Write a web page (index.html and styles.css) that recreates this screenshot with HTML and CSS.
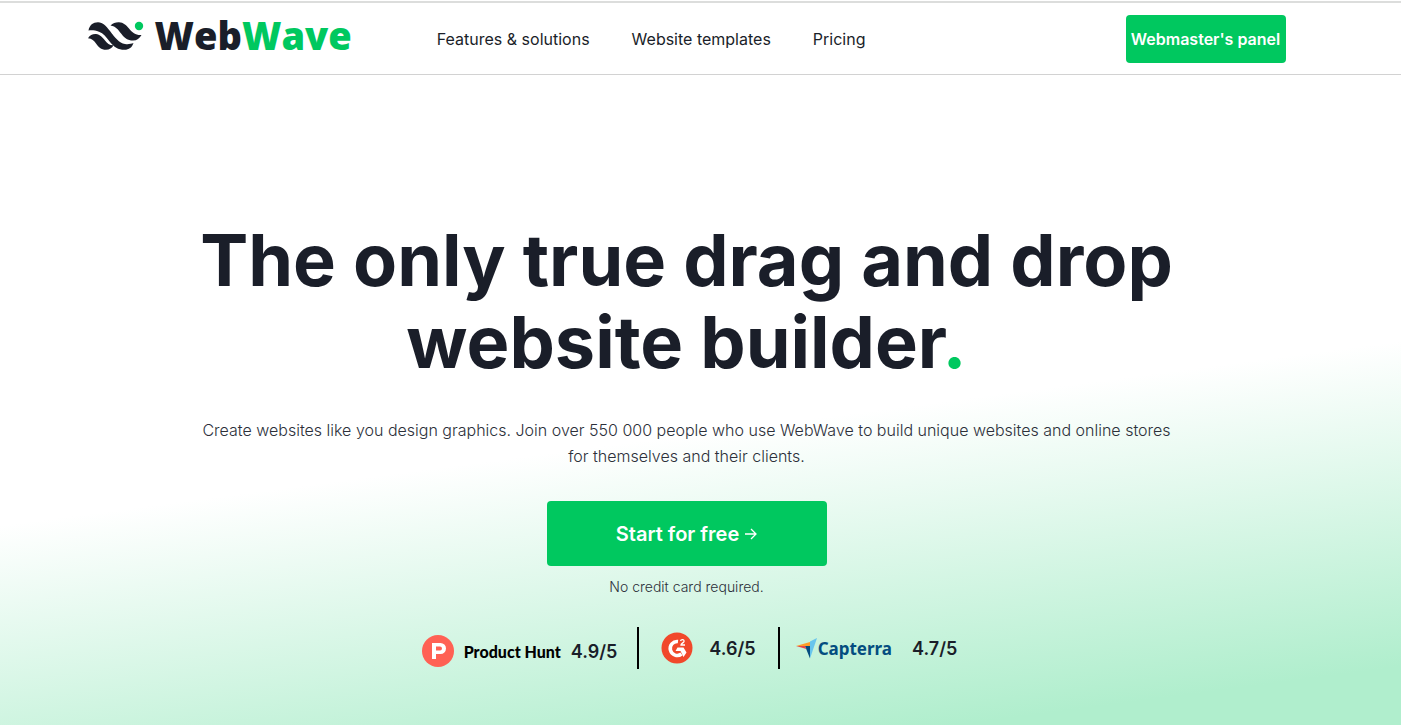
FILE: index.html
```html
<!DOCTYPE html>
<html lang="en">
<head>
<meta charset="utf-8">
<meta name="viewport" content="width=device-width, initial-scale=1">
<title>WebWave</title>
<link rel="stylesheet" href="styles.css">
</head>
<body>
<header class="site-header">
  <div class="header-inner">
    <a class="logo" href="#" aria-label="WebWave">
      <svg class="logo-mark" viewBox="0 0 56 30" width="56" height="30" aria-hidden="true">
        <g fill="#1a1e29">
          <path d="M0.500 9.500C1.500 4 5 1.200 10 1.200C15 1.200 18 5 22 10C27 16.500 31 22 37 23C40.500 23.500 43 22.800 45.500 22C44 26.500 41 28.800 36.500 28.800C30 28.800 26 26 22 21C18 16 15.500 12.500 11 10.800C7 9.300 4 9 0.500 9.500Z"/>
          <path d="M22.500 4.500C25 2.200 27.500 1.200 31 1.300C35.500 1.600 38 4 41 7.500C44.500 11.800 48 14.500 53.500 14C51.500 17.500 49 19.500 45 19.600C39.500 19.500 36.500 17 33.500 13C30 8.500 28 5.500 22.500 4.500Z"/>
          <path d="M0 17.200C2 14.200 4.500 12.800 8 13C12 13.300 14.500 16.500 17 19.500C19.500 22.500 21.500 24.500 25.500 24.300C24 27.200 21.500 28.800 18 28.800C13 28.800 10.500 26 8 22.500C6 19.500 4 17.500 0 17.200Z"/>
        </g>
        <circle cx="51" cy="5" r="4.200" fill="#00c85f"/>
      </svg>
      <span class="logo-text">Web<span class="accent">Wave</span></span>
    </a>
    <nav class="nav" aria-label="Main">
      <a href="#">Features &amp; solutions</a>
      <a href="#">Website templates</a>
      <a href="#">Pricing</a>
    </nav>
    <a class="panel-button" href="#">Webmaster's panel</a>
  </div>
</header>
<main class="hero">
  <h1>The only true drag and drop website builder<span class="accent">.</span></h1>
  <p class="lead">Create websites like you design graphics. Join over 550 000 people who use WebWave to build unique websites and online stores for themselves and their clients.</p>
  <a class="cta" href="#">Start for free
    <svg viewBox="0 0 12 12" width="12" height="12" fill="none" stroke="currentColor" stroke-width="1.300" aria-hidden="true"><path d="M0 6H11M6 1L11 6L6 11"/></svg>
  </a>
  <p class="note">No credit card required.</p>
  <ul class="ratings">
    <li class="rating">
      <svg viewBox="0 0 32 32" width="32" height="32" aria-hidden="true"><circle cx="16" cy="16" r="16" fill="#ff6154"/><path fill="#fff" fill-rule="evenodd" d="M10 8H18.500A5.500 5.500 0 0 1 18.500 19H14V24H10ZM14 11.500V15.500H18A2 2 0 0 0 18 11.500Z"/></svg>
      <span class="hunt">Product Hunt</span>
      <span class="score">4.9/5</span>
    </li>
    <li class="rating rating-g2">
      <svg viewBox="0 0 32 32" width="32" height="32" role="img" aria-label="G2"><circle cx="16" cy="16" r="15.500" fill="#f1482b"/><path d="M17 9.500A7 7 0 1 0 20.500 22" fill="none" stroke="#fff" stroke-width="3.500"/><path d="M16.500 15.500H22.500L25.500 20.500L22.500 25L19.500 19H14.500Z" fill="#fff"/><path d="M19.500 9C20 7 23.500 7 23 9.500C22.500 11 20 11.500 20 13H24" fill="none" stroke="#fff" stroke-width="1.300"/></svg>
      <span class="score">4.6/5</span>
    </li>
    <li class="rating rating-capterra">
      <span class="capterra">
        <svg viewBox="0 0 22 21" width="22" height="21" aria-hidden="true"><path fill="#ff9d28" d="M0 8L14 4V8Z"/><path fill="#68c5ed" d="M14 3.500L21 0L14 20.500Z"/><path fill="#044d80" d="M9 8H14V20.500Z"/><path fill="#e54747" d="M0 8H9L10.500 11Z"/></svg>
        Capterra
      </span>
      <span class="score">4.7/5</span>
    </li>
  </ul>
</main>
</body>
</html>
```
FILE: styles.css
```css
* {
  box-sizing: border-box;
}

body {
  margin: 0;
  min-height: 100vh;
  display: flex;
  flex-direction: column;
  background: #fff;
  color: #1a1e29;
  font-family: Inter, "Liberation Sans", sans-serif;
  font-size: 16px;
}

a {
  color: inherit;
  text-decoration: none;
}

.accent {
  color: #00c85f;
}

.site-header {
  margin-top: 1px;
  border-top: 2px solid #dcdddc;
  border-bottom: 1px solid #d2d2d2;
  padding: 12px 28px 11px 0;
}

.header-inner {
  max-width: 1198px;
  margin: 0 auto;
  display: flex;
  align-items: center;
}

.logo {
  display: flex;
  align-items: center;
  gap: 11px;
}

.logo-mark {
  margin-bottom: 6px;
}

.logo-text {
  padding-bottom: 8px;
  font-family: "Open Sans", sans-serif;
  font-weight: 800;
  font-size: 38px;
  line-height: 40px;
}

.nav {
  display: flex;
  gap: 42px;
  margin-left: 85px;
}

.panel-button {
  margin-left: auto;
  width: 160px;
  line-height: 48px;
  border-radius: 4px;
  background: #00c85f;
  color: #fff;
  font-weight: 600;
  text-align: center;
}

.hero {
  flex: 1;
  display: flex;
  flex-direction: column;
  align-items: center;
  padding: 144px 28px 54px 0;
  text-align: center;
  background: linear-gradient(172.5deg, #fff 54%, #b0eecd 93%);
}

h1 {
  max-width: 1000px;
  margin: 0;
  font-size: 72px;
  line-height: 82px;
  font-weight: 700;
}

.lead {
  max-width: 984px;
  margin: 34px 0 0;
  color: #2c303a;
  font-weight: 300;
  line-height: 26px;
}

.cta {
  display: flex;
  align-items: center;
  justify-content: center;
  gap: 6px;
  width: 280px;
  height: 65px;
  margin-top: 32px;
  border-radius: 4px;
  background: #00c85f;
  color: #fff;
  font-size: 20px;
  font-weight: 600;
}

.note {
  margin: 11px 0 0;
  color: #2c303a;
  font-size: 14px;
  line-height: 20px;
  font-weight: 300;
}

.ratings {
  display: flex;
  margin: 30px 0 0;
  padding: 0 0 0 6px;
  list-style: none;
}

.rating {
  display: flex;
  align-items: center;
  height: 42px;
}

.rating + .rating {
  border-left: 2px solid #000;
}

.rating:first-child {
  gap: 10px;
  padding: 6px 20px 0 0;
}

.rating-g2 {
  gap: 16px;
  padding: 0 22px;
}

.rating-capterra {
  gap: 20px;
  padding-left: 16px;
}

.score {
  font-size: 18px;
  font-weight: 600;
}

.hunt {
  color: #000;
  font-family: Lato, sans-serif;
  font-size: 16px;
  font-weight: 900;
}

.capterra {
  display: flex;
  align-items: center;
  color: #044d80;
  font-family: "Noto Sans", sans-serif;
  font-size: 17px;
  font-weight: 700;
}
```
